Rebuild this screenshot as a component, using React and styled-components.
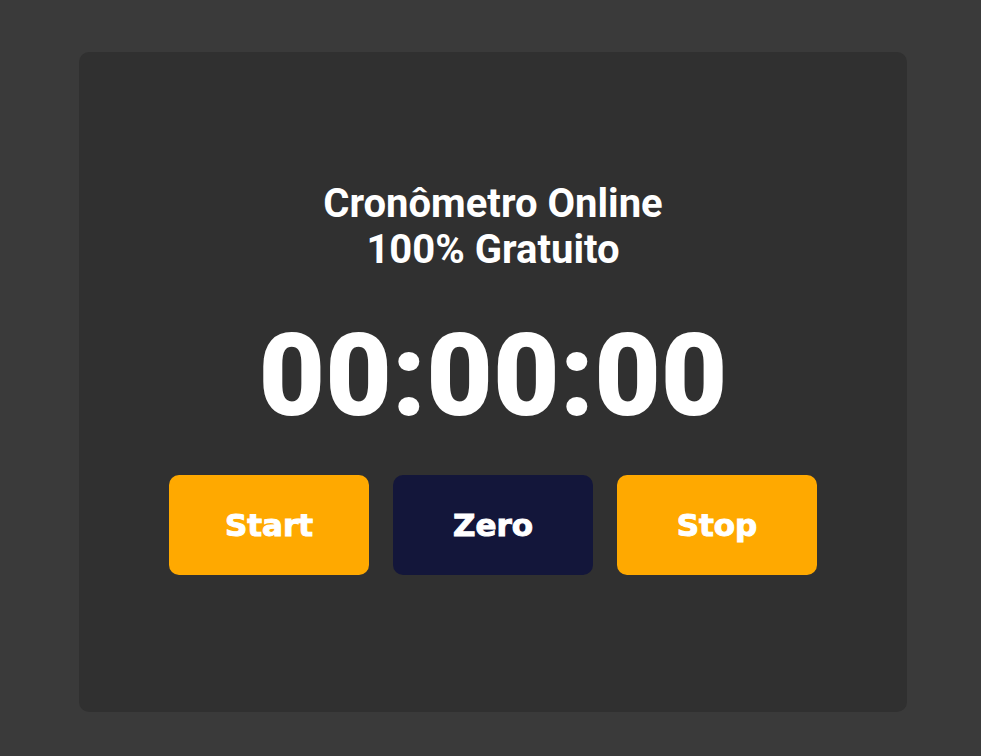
import React from 'react';
import styled, { createGlobalStyle } from 'styled-components';

const GlobalStyle = createGlobalStyle`
  html, body {
    margin: 0;
    padding: 0;
    background: #3a3a3a;
  }
  * { box-sizing: border-box; }
`;

const Page = styled.main`
  min-height: 756px;
  padding: 52px 74px 44px 79px;
  display: flex;
`;

const Card = styled.section`
  flex: 1;
  height: 660px;
  background: #303030;
  border-radius: 10px;
  display: flex;
  flex-direction: column;
  align-items: center;
  justify-content: center;
  padding-bottom: 8px;
`;

const Title = styled.h1`
  margin: 0;
  font-family: Roboto, "Noto Sans", sans-serif;
  font-weight: 700;
  font-size: 40px;
  line-height: 46px;
  color: #ffffff;
  text-align: center;
`;

const Clock = styled.div`
  margin-top: 45px;
  font-family: Roboto, "Noto Sans", sans-serif;
  font-weight: 900;
  font-size: 115px;
  line-height: 115px;
  color: #ffffff;
`;

const Buttons = styled.div`
  margin-top: 42px;
  display: flex;
  gap: 24px;
`;

const Button = styled.button`
  width: 200px;
  height: 100px;
  border: none;
  border-radius: 10px;
  background: ${p => (p.$dark ? '#13163a' : '#ffa900')};
  color: #ffffff;
  font-family: "DejaVu Sans", "Liberation Sans", sans-serif;
  font-weight: 700;
  font-size: 31px;
  -webkit-text-stroke: 1px #ffffff;
  cursor: pointer;
`;

export default function App() {
  return (
    <>
      <GlobalStyle />
      <Page>
        <Card>
          <Title>
            Cronômetro Online
            <br />
            100% Gratuito
          </Title>
          <Clock>00:00:00</Clock>
          <Buttons>
            <Button>Start</Button>
            <Button $dark>Zero</Button>
            <Button>Stop</Button>
          </Buttons>
        </Card>
      </Page>
    </>
  );
}
